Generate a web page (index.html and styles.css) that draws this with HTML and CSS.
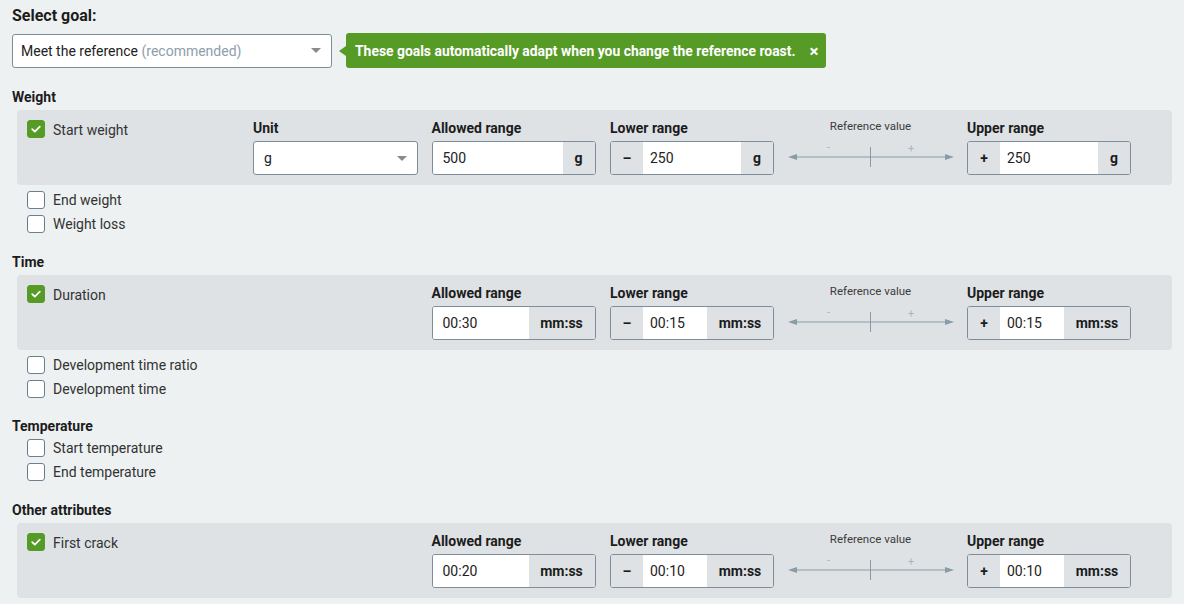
FILE: index.html
```html
<!DOCTYPE html>
<html>
<head>
<meta charset="utf-8">
<link rel="stylesheet" href="styles.css">
</head>
<body>
<div class="page">
  <div class="title">Select goal:</div>
  <div class="goal-row">
    <div class="select goal-select">
      <span>Meet the reference <span class="muted">(recommended)</span></span>
      <span class="caret"></span>
    </div>
    <div class="tip">
      <span>These goals automatically adapt when you change the reference roast.</span>
      <span class="tip-close">×</span>
    </div>
  </div>

  <section class="section first">
    <div class="heading">Weight</div>
    <div class="panel">
      <div class="check-item"><span class="cb checked"><svg viewBox="0 0 18 18" width="18" height="18"><path d="M5.2 9.2 L7.8 11.6 L12.8 6.6" fill="none" stroke="#fff" stroke-width="1.8" stroke-linecap="round" stroke-linejoin="round"/></svg></span><span class="cb-label">Start weight</span></div>
      <div class="field">
        <div class="field-label">Unit</div>
        <div class="select unit-select"><span>g</span><span class="caret"></span></div>
      </div>
      <div class="field">
        <div class="field-label">Allowed range</div>
        <div class="group"><span class="val">500</span><span class="addon suffix">g</span></div>
      </div>
      <div class="field">
        <div class="field-label">Lower range</div>
        <div class="group"><span class="addon prefix">–</span><span class="val short">250</span><span class="addon suffix">g</span></div>
      </div>
      <div class="ref">
        <div class="ref-label">Reference value</div>
        <svg class="ref-svg" viewBox="0 0 166 30" width="166" height="30"><text x="39" y="9" class="pm">-</text><text x="120" y="10" class="pm">+</text><line x1="6" y1="15" x2="160" y2="15" stroke="#8a9ba8" stroke-width="1"/><polygon points="0,15 9,12 9,18" fill="#8a9ba8"/><polygon points="166,15 157,12 157,18" fill="#8a9ba8"/><line x1="82.5" y1="5" x2="82.5" y2="25" stroke="#8a9ba8" stroke-width="1"/></svg>
      </div>
      <div class="field">
        <div class="field-label">Upper range</div>
        <div class="group"><span class="addon prefix">+</span><span class="val short">250</span><span class="addon suffix">g</span></div>
      </div>
    </div>
    <div class="rows">
      <div class="check-item row"><span class="cb"></span><span class="cb-label">End weight</span></div>
      <div class="check-item row"><span class="cb"></span><span class="cb-label">Weight loss</span></div>
    </div>
  </section>

  <section class="section">
    <div class="heading">Time</div>
    <div class="panel">
      <div class="check-item"><span class="cb checked"><svg viewBox="0 0 18 18" width="18" height="18"><path d="M5.2 9.2 L7.8 11.6 L12.8 6.6" fill="none" stroke="#fff" stroke-width="1.8" stroke-linecap="round" stroke-linejoin="round"/></svg></span><span class="cb-label">Duration</span></div>
      <div class="field empty"></div>
      <div class="field">
        <div class="field-label">Allowed range</div>
        <div class="group"><span class="val">00:30</span><span class="addon suffix wide">mm:ss</span></div>
      </div>
      <div class="field">
        <div class="field-label">Lower range</div>
        <div class="group"><span class="addon prefix">–</span><span class="val short">00:15</span><span class="addon suffix wide">mm:ss</span></div>
      </div>
      <div class="ref">
        <div class="ref-label">Reference value</div>
        <svg class="ref-svg" viewBox="0 0 166 30" width="166" height="30"><text x="39" y="9" class="pm">-</text><text x="120" y="10" class="pm">+</text><line x1="6" y1="15" x2="160" y2="15" stroke="#8a9ba8" stroke-width="1"/><polygon points="0,15 9,12 9,18" fill="#8a9ba8"/><polygon points="166,15 157,12 157,18" fill="#8a9ba8"/><line x1="82.5" y1="5" x2="82.5" y2="25" stroke="#8a9ba8" stroke-width="1"/></svg>
      </div>
      <div class="field">
        <div class="field-label">Upper range</div>
        <div class="group"><span class="addon prefix">+</span><span class="val short">00:15</span><span class="addon suffix wide">mm:ss</span></div>
      </div>
    </div>
    <div class="rows">
      <div class="check-item row"><span class="cb"></span><span class="cb-label">Development time ratio</span></div>
      <div class="check-item row"><span class="cb"></span><span class="cb-label">Development time</span></div>
    </div>
  </section>

  <section class="section">
    <div class="heading">Temperature</div>
    <div class="rows tight">
      <div class="check-item row"><span class="cb"></span><span class="cb-label">Start temperature</span></div>
      <div class="check-item row"><span class="cb"></span><span class="cb-label">End temperature</span></div>
    </div>
  </section>

  <section class="section">
    <div class="heading">Other attributes</div>
    <div class="panel">
      <div class="check-item"><span class="cb checked"><svg viewBox="0 0 18 18" width="18" height="18"><path d="M5.2 9.2 L7.8 11.6 L12.8 6.6" fill="none" stroke="#fff" stroke-width="1.8" stroke-linecap="round" stroke-linejoin="round"/></svg></span><span class="cb-label">First crack</span></div>
      <div class="field empty"></div>
      <div class="field">
        <div class="field-label">Allowed range</div>
        <div class="group"><span class="val">00:20</span><span class="addon suffix wide">mm:ss</span></div>
      </div>
      <div class="field">
        <div class="field-label">Lower range</div>
        <div class="group"><span class="addon prefix">–</span><span class="val short">00:10</span><span class="addon suffix wide">mm:ss</span></div>
      </div>
      <div class="ref">
        <div class="ref-label">Reference value</div>
        <svg class="ref-svg" viewBox="0 0 166 30" width="166" height="30"><text x="39" y="9" class="pm">-</text><text x="120" y="10" class="pm">+</text><line x1="6" y1="15" x2="160" y2="15" stroke="#8a9ba8" stroke-width="1"/><polygon points="0,15 9,12 9,18" fill="#8a9ba8"/><polygon points="166,15 157,12 157,18" fill="#8a9ba8"/><line x1="82.5" y1="5" x2="82.5" y2="25" stroke="#8a9ba8" stroke-width="1"/></svg>
      </div>
      <div class="field">
        <div class="field-label">Upper range</div>
        <div class="group"><span class="addon prefix">+</span><span class="val short">00:10</span><span class="addon suffix wide">mm:ss</span></div>
      </div>
    </div>
    <div class="rows">
      <div class="check-item row"><span class="cb"></span></div>
    </div>
  </section>
</div>
</body>
</html>
```

FILE: styles.css
```css
* { box-sizing: border-box; }
html, body { margin: 0; padding: 0; }
body {
  background: #edf1f2;
  font-family: Roboto, "Liberation Sans", Arial, sans-serif;
  color: #222;
  font-size: 14px;
  overflow: hidden;
  height: 604px;
}
.page { padding: 6px 12px 0 12px; }
.title { font-size: 16px; font-weight: 700; line-height: 20px; color: #1c1c1c; }
.goal-row { display: flex; align-items: center; margin-top: 7px; height: 35px; }
.select {
  display: flex; align-items: center; justify-content: space-between;
  background: #fff; border: 1px solid #7d8d9b; border-radius: 3px;
  height: 34px; padding: 0 10px 0 8px; font-size: 14px; color: #222;
}
.goal-select { width: 320px; }
.muted { color: #8e9eab; }
.caret { width: 0; height: 0; border-left: 5px solid transparent; border-right: 5px solid transparent; border-top: 5px solid #8a8a8a; }
.tip {
  position: relative; margin-left: 14px; height: 35px;
  background: #569b25; color: #fff; border-radius: 3px;
  display: flex; align-items: center; padding: 0 8px 0 9px;
  font-weight: 700; font-size: 13.9px;
}
.tip::before {
  content: ""; position: absolute; left: -7px; top: 13px;
  border-top: 5px solid transparent; border-bottom: 5px solid transparent; border-right: 7px solid #569b25;
}
.tip-close { margin-left: 14px; font-size: 17px; font-weight: 700; }
.section { margin-top: 13.5px; }
.section.first { margin-top: 20px; }
.heading { font-weight: 700; font-size: 14px; line-height: 18px; margin-bottom: 4px; color: #1c1c1c; }
.panel {
  margin-left: 5px; background: #dee2e5; border-radius: 4px;
  padding: 9px 10px 10px 10px; height: 75px;
  display: grid; grid-template-columns: 211.5px repeat(5, 164px); column-gap: 14.5px;
}
.check-item { display: flex; align-items: center; height: 20px; }
.panel .check-item { align-self: start; }
.panel .check-item .cb-label { padding-top: 2px; }
.cb {
  width: 18px; height: 18px; border: 1px solid #6b7f90; border-radius: 3px;
  background: #fff; flex: none; display: block;
}
.cb.checked { background: #569b25; border-color: #569b25; }
.cb.checked svg { display: block; margin: -1px; }
.cb-label { margin-left: 8px; font-size: 14px; color: #333; }
.field-label { font-weight: 700; font-size: 14px; line-height: 18px; margin-bottom: 4px; color: #1c1c1c; }
.unit-select { width: 165px; font-size: 14px; padding-left: 10px; }
.group {
  display: flex; height: 34px; border: 1px solid #7d8d9b; border-radius: 3px;
  overflow: hidden; background: #fff;
}
.val { flex: 1; display: flex; align-items: center; padding-left: 10px; background: #fff; font-size: 14px; color: #222; }
.val.short { padding-left: 7px; }
.addon { background: #dee2e5; display: flex; align-items: center; justify-content: center; font-weight: 700; font-size: 14px; color: #1c1c1c; }
.addon.prefix { width: 32px; }
.addon.suffix { width: 32px; }
.addon.suffix.wide { width: 66px; }
.ref { display: flex; flex-direction: column; align-items: center; }
.ref-label { font-size: 11.5px; line-height: 14px; color: #3c3c3c; }
.ref-svg { display: block; margin-top: 9px; }
.pm { font-size: 11px; fill: #a9b5be; font-family: Roboto, sans-serif; }
.rows { margin-top: 6px; margin-left: 15px; }
.rows.tight { margin-top: 0; }
.row { height: 24px; align-items: flex-start; }
.row .cb-label { line-height: 18px; }
```
